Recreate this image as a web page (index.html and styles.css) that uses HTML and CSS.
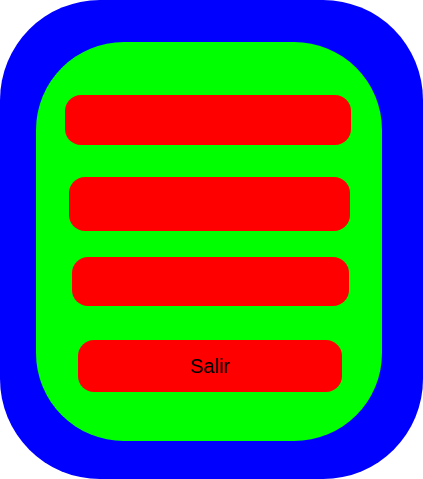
FILE: index.html
```html
<!DOCTYPE html>
<html lang="es">
<head>
<meta charset="utf-8">
<title>Menú</title>
<link rel="stylesheet" href="styles.css">
</head>
<body>
<div class="frame">
  <div class="panel">
    <div class="btn btn-1"></div>
    <div class="btn btn-2"></div>
    <div class="btn btn-3"></div>
    <div class="btn btn-4">Salir</div>
  </div>
</div>
</body>
</html>
```

FILE: styles.css
```css
html, body {
  margin: 0;
  padding: 0;
  background: #ffffff;
}

.frame {
  box-sizing: border-box;
  width: 423px;
  height: 479px;
  background: #0000ff;
  border-radius: 100px;
  padding: 42px 41px 38px 36px;
}

.panel {
  box-sizing: border-box;
  width: 346px;
  height: 399px;
  background: #00ff00;
  border-radius: 88px;
  padding-top: 53px;
  display: flex;
  flex-direction: column;
}

.btn {
  background: #ff0000;
  border-radius: 16px;
  display: flex;
  align-items: center;
  justify-content: center;
  font-family: "Liberation Sans", Arial, sans-serif;
  font-size: 20px;
  color: #000000;
}

.btn-1 {
  height: 50px;
  margin: 0 31px 0 29px;
}

.btn-2 {
  height: 54px;
  margin: 32px 32px 0 33px;
}

.btn-3 {
  height: 49px;
  margin: 26px 33px 0 36px;
}

.btn-4 {
  height: 52px;
  margin: 34px 40px 0 42px;
}
```
